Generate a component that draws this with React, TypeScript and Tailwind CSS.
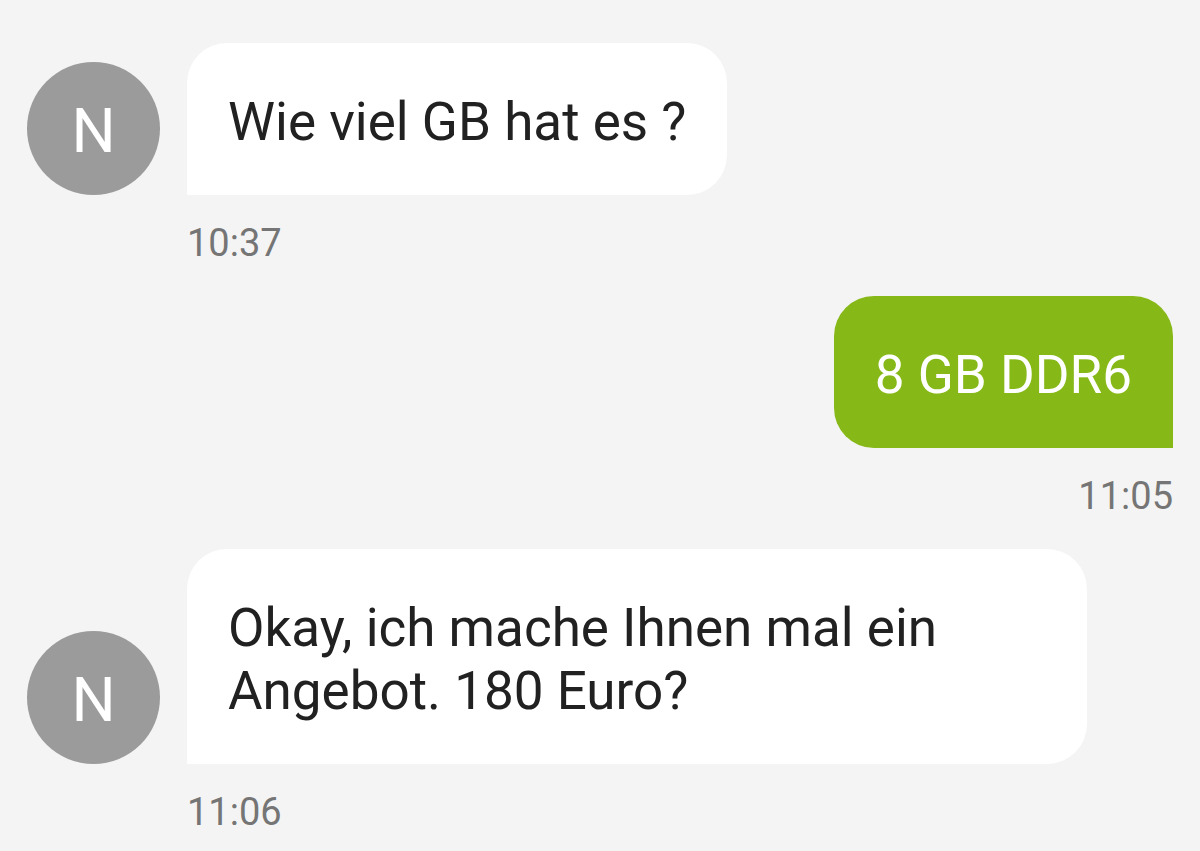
interface Message {
  id: number;
  text: string;
  time: string;
  own: boolean;
}

const messages: Message[] = [
  { id: 1, text: "Wie viel GB hat es ?", time: "10:37", own: false },
  { id: 2, text: "8 GB DDR6", time: "11:05", own: true },
  {
    id: 3,
    text: "Okay, ich mache Ihnen mal ein Angebot. 180 Euro?",
    time: "11:06",
    own: false,
  },
];

function Avatar({ initial }: { initial: string }) {
  return (
    <div className="flex size-[133px] shrink-0 items-center justify-center rounded-full bg-[#9b9b9b] pt-1 text-[62px] leading-none text-white">
      {initial}
    </div>
  );
}

function IncomingMessage({ message }: { message: Message }) {
  return (
    <li className="grid grid-cols-[133px_1fr] gap-x-[27px]">
      <div className="flex items-end">
        <Avatar initial="N" />
      </div>
      <p className="max-w-[900px] justify-self-start rounded-[40px] rounded-bl-none bg-white px-[41px] pt-12 pb-[41px] text-[#212121]">
        {message.text}
      </p>
      <time className="col-start-2 mt-[26px] text-[38px] leading-[44px] text-[#757575]">
        {message.time}
      </time>
    </li>
  );
}

function OutgoingMessage({ message }: { message: Message }) {
  return (
    <li className="flex flex-col items-end">
      <p className="max-w-[900px] rounded-[40px] rounded-br-none bg-[#86b817] px-[41px] pt-12 pb-[41px] text-white">
        {message.text}
      </p>
      <time className="mt-[26px] text-[38px] leading-[44px] text-[#757575]">
        {message.time}
      </time>
    </li>
  );
}

export default function App() {
  return (
    <main className="min-h-screen bg-[#f4f4f4] px-[27px] pt-[43px] font-['Roboto',sans-serif] text-[53px] leading-[63px]">
      <ul className="flex flex-col gap-[31px]">
        {messages.map((message) =>
          message.own ? (
            <OutgoingMessage key={message.id} message={message} />
          ) : (
            <IncomingMessage key={message.id} message={message} />
          )
        )}
      </ul>
    </main>
  );
}
